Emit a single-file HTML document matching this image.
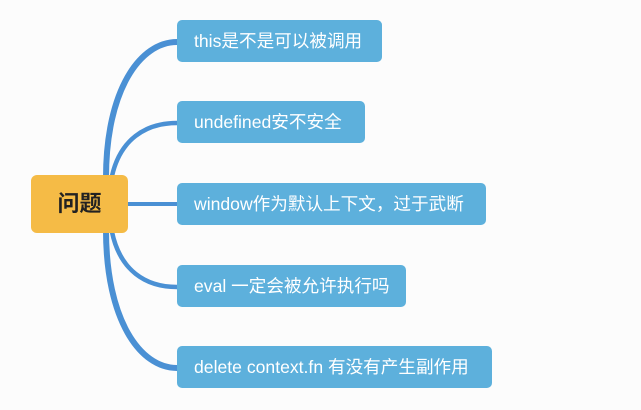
<!DOCTYPE html>
<html><head><meta charset="utf-8"><style>
body{margin:0;width:641px;height:410px;background:#fcfcfc;overflow:hidden;position:relative;font-family:"Liberation Sans","Noto Sans CJK SC",sans-serif}
.b{position:absolute;left:177px;height:42px;background:#5db0dc;border-radius:5px;color:#fff;font-size:17.6px;line-height:42px;padding-left:17px;box-sizing:border-box;white-space:nowrap}
.c{position:absolute;left:31px;top:175px;width:97px;height:58px;background:#f5bb46;border-radius:6px;font-size:22px;line-height:58px;text-align:center;color:#222;font-weight:bold}
svg{position:absolute;left:0;top:0}
</style></head><body>
<svg width="641" height="410"><g fill="none" stroke="#4a90d4" stroke-linecap="round">
<path d="M106 178 C106 90 140 42 177 42" stroke-width="6"/>
<path d="M112 176 C120 140 145 123 177 123" stroke-width="4.5"/>
<path d="M125 204 L177 204" stroke-width="4"/>
<path d="M112 232 C120 270 145 287 177 287" stroke-width="4.5"/>
<path d="M106 230 C106 320 140 368 177 368" stroke-width="6"/>
</g></svg>
<div class="c">问题</div>
<div class="b" style="top:20px;width:205px">this是不是可以被调用</div>
<div class="b" style="top:101px;width:188px">undefined安不安全</div>
<div class="b" style="top:183px;width:309px">window作为默认上下文，过于武断</div>
<div class="b" style="top:265px;width:229px">eval 一定会被允许执行吗</div>
<div class="b" style="top:346px;width:315px">delete context.fn 有没有产生副作用</div>
</body></html>
